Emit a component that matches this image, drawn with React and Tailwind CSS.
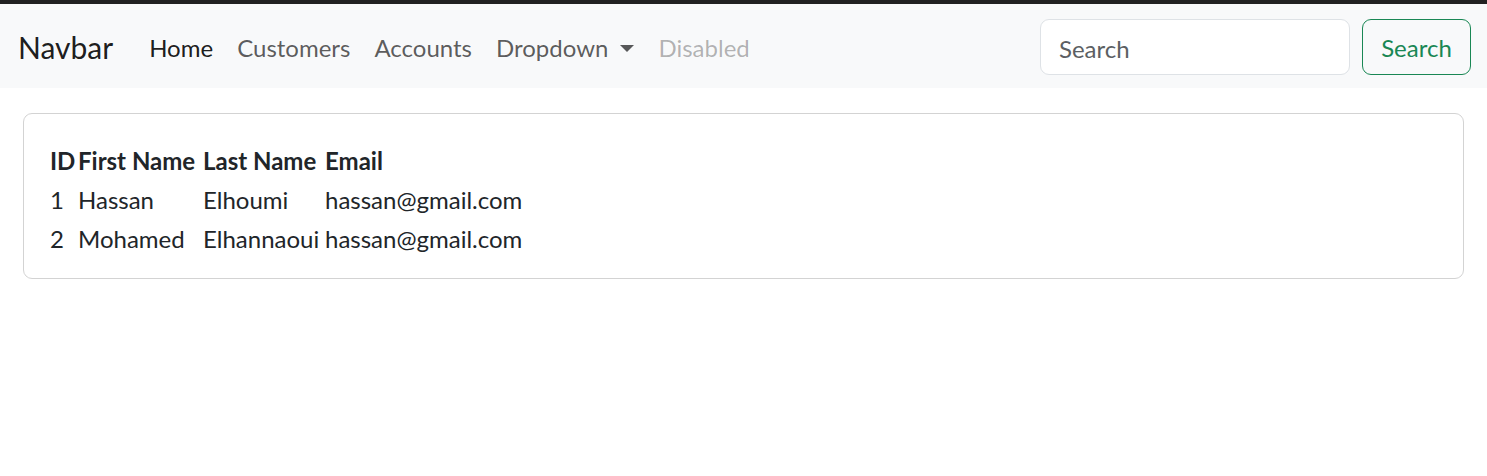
import React from 'react'

const customers = [
  { id: 1, first: 'Hassan', last: 'Elhoumi', email: 'hassan@gmail.com' },
  { id: 2, first: 'Mohamed', last: 'Elhannaoui', email: 'hassan@gmail.com' },
]

const font = { fontFamily: 'Lato, "Noto Sans", sans-serif' }

export default function App() {
  return (
    <div className="min-h-[476px] bg-white text-[#212529]" style={font}>
      <div className="h-[4px] bg-[#212121]" />

      <nav className="h-[84px] bg-[#f8f9fa] flex items-center pl-[18px] pr-[16px] pt-[2px]">
        <a className="text-[30px] text-black/90 mr-[24px] leading-none">Navbar</a>
        <ul className="flex items-center text-[24px] pt-[2px]">
          <li className="px-[12px] text-black/90">Home</li>
          <li className="px-[12px] text-black/65">Customers</li>
          <li className="px-[12px] text-black/65">Accounts</li>
          <li className="px-[12px] text-black/65 flex items-center">
            Dropdown
            <span className="ml-[12px] w-0 h-0 border-x-[7px] border-x-transparent border-t-[7px] border-t-[#575859]" />
          </li>
          <li className="px-[12px] text-black/30">Disabled</li>
        </ul>

        <form className="ml-auto flex items-center gap-[12px]">
          <input
            type="search"
            placeholder="Search"
            className="w-[310px] h-[56px] px-[18px] pt-[2px] text-[24px] bg-white border border-[#dee2e6] rounded-[9px] placeholder:text-[#5c5f63] outline-none"
            style={font}
          />
          <button
            type="button"
            className="w-[109px] h-[56px] pt-[2px] text-[24px] text-[#198754] border border-[#198754] rounded-[9px]"
          >
            Search
          </button>
        </form>
      </nav>

      <div className="mx-[23px] mt-[25px] border border-[#d3d3d3] rounded-[9px] px-[24px] pt-[26px] pb-[19px]">
        <table className="border-separate border-spacing-[2px] text-[24px] text-left">
          <thead>
            <tr className="h-[37px]">
              <th className="p-0 w-[26px] font-bold">ID</th>
              <th className="p-0 w-[123px] font-bold">First Name</th>
              <th className="p-0 w-[120px] font-bold">Last Name</th>
              <th className="p-0 font-bold">Email</th>
            </tr>
          </thead>
          <tbody>
            {customers.map((c) => (
              <tr key={c.id} className="h-[37px]">
                <td className="p-0">{c.id}</td>
                <td className="p-0">{c.first}</td>
                <td className="p-0">{c.last}</td>
                <td className="p-0">{c.email}</td>
              </tr>
            ))}
          </tbody>
        </table>
      </div>
    </div>
  )
}
